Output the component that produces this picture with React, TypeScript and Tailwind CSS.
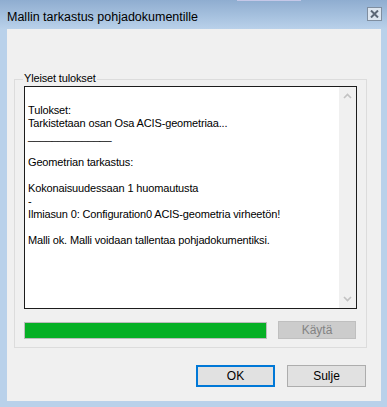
import React from "react";

const lines = [
  "",
  "Tulokset:",
  "Tarkistetaan osan Osa ACIS-geometriaa...",
  "______________",
  "",
  "Geometrian tarkastus:",
  "",
  "Kokonaisuudessaan 1 huomautusta",
  "-",
  "Ilmiasun 0: Configuration0 ACIS-geometria virheetön!",
  "",
  "Malli ok. Malli voidaan tallentaa pohjadokumentiksi.",
];

export default function App() {
  return (
    <div
      className="w-[387px] h-[407px] flex flex-col bg-[#b9d1ea] relative overflow-hidden"
      style={{ fontFamily: '"Liberation Sans", Arial, sans-serif' }}
    >
      {/* title bar */}
      <div className="h-[29px] shrink-0 flex items-start bg-gradient-to-b from-[#8fadd0] to-[#b9d1ea] relative">
        <div className="absolute left-[237px] top-0 w-[64px] h-[1px] bg-[#c5c8e8]" />
        <div className="pl-[7px] pt-[9px] text-[12.5px] leading-[16px] text-black">
          Mallin tarkastus pohjadokumentille
        </div>
        <div className="ml-auto mt-[7px] mr-[5px] w-[15px] h-[14px] border border-[#7f8ea0] bg-[#dde6f0] flex items-center justify-center">
          <svg width="9" height="8" viewBox="0 0 9 8">
            <path d="M1 0.5 L8 7.5 M8 0.5 L1 7.5" stroke="#5b6776" strokeWidth="2" />
          </svg>
        </div>
      </div>
      {/* client area */}
      <div className="ml-[7px] mr-[6px] mb-[6px] flex-1 bg-[#f0f0f0] flex flex-col">
        {/* group box */}
        <div className="mt-[50px] ml-[7px] mr-[14px] h-[269px] border border-[#dcdcdc] relative flex flex-col">
          <div className="absolute left-[8px] top-[-8px] bg-[#f0f0f0] px-[1px] text-[11px] leading-[13px] tracking-[-0.15px] text-black">
            Yleiset tulokset
          </div>
          <div className="mt-[6px] ml-[9px] w-[333px] h-[223px] border border-[#1c1c1c] bg-white flex">
            <div className="flex-1 pt-[4px] pl-[3px] text-[11px] leading-[13px] tracking-[-0.15px] text-black">
              {lines.map((l, i) => (
                <div key={i} className="h-[13px] whitespace-pre">
                  {l}
                </div>
              ))}
            </div>
            <div className="w-[17px] bg-[#f0f0f0] flex flex-col justify-between items-center py-[6px]">
              <svg width="9" height="6" viewBox="0 0 9 6">
                <path d="M1 5 L4.5 1.5 L8 5" stroke="#c2c2c2" strokeWidth="1.6" fill="none" />
              </svg>
              <svg width="9" height="6" viewBox="0 0 9 6">
                <path d="M1 1 L4.5 4.5 L8 1" stroke="#c2c2c2" strokeWidth="1.6" fill="none" />
              </svg>
            </div>
          </div>
          <div className="mt-[12px] ml-[9px] flex items-start">
            <div className="mt-[1px] w-[243px] h-[17px] border border-[#bcbcbc] bg-[#e6e6e6] p-0">
              <div className="w-full h-full bg-[#06b025]" />
            </div>
            <div className="ml-[11px] w-[78px] h-[18px] border border-[#bfbfbf] bg-[#cccccc] flex items-center justify-center text-[12px] text-[#838383]">
              Käytä
            </div>
          </div>
        </div>
        {/* buttons */}
        <div className="mt-[17px] flex justify-end mr-[15px] gap-[12px]">
          <div className="w-[79px] h-[22px] border-2 border-[#0078d7] bg-[#e1e1e1] flex items-center justify-center text-[12px] text-black">
            OK
          </div>
          <div className="w-[79px] h-[22px] border border-[#adadad] bg-[#e1e1e1] flex items-center justify-center text-[12px] text-black">
            Sulje
          </div>
        </div>
      </div>
    </div>
  );
}
